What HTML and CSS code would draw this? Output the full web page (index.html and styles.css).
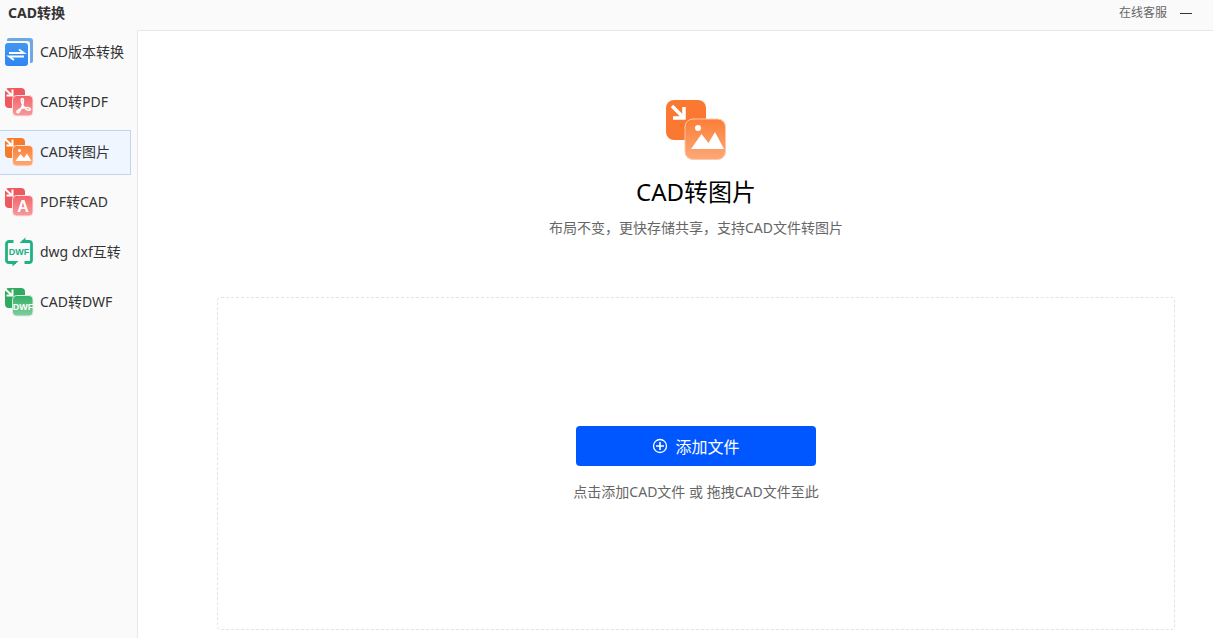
FILE: index.html
```html
<!DOCTYPE html>
<html lang="zh-CN">
<head>
    <meta charset="UTF-8">
    <meta name="viewport" content="width=device-width, initial-scale=1.0">
    <title>CAD转换</title>
    <link rel="stylesheet" href="styles.css">
</head>
<body>
    <header class="titlebar">
        <h1>CAD转换</h1>
        <div class="titlebar-actions">
            <a href="#">在线客服</a>
            <button type="button" class="minimize" aria-label="最小化">
                <svg width="12" height="12" viewBox="0 0 12 12"><path d="M0 6.5h12" stroke="#333"/></svg>
            </button>
        </div>
    </header>

    <div class="layout">
        <nav class="sidebar">
            <a href="#" class="nav-item">
                <svg class="nav-icon" viewBox="0 0 28 28">
                    <defs>
                        <linearGradient id="blue" x1="0" y1="0" x2="0" y2="1">
                            <stop offset="0" stop-color="#4297f2"/>
                            <stop offset="1" stop-color="#2f86f0"/>
                        </linearGradient>
                    </defs>
                    <path d="M4 0h21a3 3 0 0 1 3 3v20a2 2 0 0 1-2 2h-1V6a3 3 0 0 0-3-3H2V2a2 2 0 0 1 2-2z" fill="#6aa8e6"/>
                    <rect y="5" width="23" height="23" rx="3" fill="url(#blue)"/>
                    <path d="M4 15h15L14 11.500M19 18.500H4l5 3.500" fill="none" stroke="#fff" stroke-width="1.800"/>
                </svg>
                <span>CAD版本转换</span>
            </a>
            <a href="#" class="nav-item">
                <svg class="nav-icon" viewBox="0 0 28 28">
                    <defs>
                        <linearGradient id="red" x1="0" y1="0" x2="0" y2="1">
                            <stop offset="0" stop-color="#f2656a"/>
                            <stop offset="1" stop-color="#f79a9c"/>
                        </linearGradient>
                    </defs>
                    <rect width="20" height="20" rx="4" fill="#ed595f"/>
                    <path d="M0 1l6 5.500M7.500 1.500v6H1.500" fill="none" stroke="#fff" stroke-width="2"/>
                    <rect x="7.500" y="7.500" width="20.500" height="20.500" rx="4" fill="url(#red)" stroke="#fde3e3"/>
                    <path d="M17.500 10.500c-1.700 0-1.500 2.500 0 6 1.500 3.500 4.500 6 6.700 5.700s1-2.700-2-2.700c-4 0-8 1.500-9.700 3.300-1.500 1.700.500 2.700 1.800.900 1.800-2.700 3.700-6.400 4-9.700.2-2.200.1-3.500-.8-3.500z" fill="none" stroke="#fff" stroke-width="1.600"/>
                </svg>
                <span>CAD转PDF</span>
            </a>
            <a href="#" class="nav-item active">
                <svg class="nav-icon" viewBox="0 0 28 28">
                    <defs>
                        <linearGradient id="orange" x1="0" y1="0" x2="0" y2="1">
                            <stop offset="0" stop-color="#fb7f37"/>
                            <stop offset="1" stop-color="#fda878"/>
                        </linearGradient>
                    </defs>
                    <rect width="20" height="20" rx="4" fill="#f47a2c"/>
                    <path d="M0 1l6 5.500M7.500 1.500v6H1.500" fill="none" stroke="#fff" stroke-width="2"/>
                    <rect x="7.500" y="7.500" width="20.500" height="20.500" rx="4" fill="url(#orange)" stroke="#fde5d5"/>
                    <circle cx="14.500" cy="12.500" r="1.500" fill="#fff"/>
                    <path d="M10.500 23l5-7 3.500 4 3-4.500 4.500 7.500z" fill="#fff"/>
                </svg>
                <span>CAD转图片</span>
            </a>
            <a href="#" class="nav-item">
                <svg class="nav-icon" viewBox="0 0 28 28">
                    <rect width="20" height="20" rx="4" fill="#ed595f"/>
                    <path d="M0 1l6 5.500M7.500 1.500v6H1.500" fill="none" stroke="#fff" stroke-width="2"/>
                    <rect x="7.500" y="7.500" width="20.500" height="20.500" rx="4" fill="url(#red)" stroke="#fde3e3"/>
                    <text x="18" y="24" class="icon-letter">A</text>
                </svg>
                <span>PDF转CAD</span>
            </a>
            <a href="#" class="nav-item">
                <svg class="nav-icon" viewBox="0 0 28 28">
                    <path d="M8.500 3.500H4A2.500 2.500 0 0 0 1.500 6v16A2.500 2.500 0 0 0 4 24.500h7M19.500 24.500H24a2.500 2.500 0 0 0 2.500-2.500V6A2.500 2.500 0 0 0 24 3.500h-7" fill="none" stroke="#22b183" stroke-width="2.800"/>
                    <path d="M14.500 5L20.500-.5V5zM13.500 23L7.500 28.500V23z" fill="#22b183"/>
                    <text x="14" y="17" class="icon-label green">DWF</text>
                </svg>
                <span>dwg dxf互转</span>
            </a>
            <a href="#" class="nav-item">
                <svg class="nav-icon" viewBox="0 0 28 28">
                    <defs>
                        <linearGradient id="green" x1="0" y1="0" x2="0" y2="1">
                            <stop offset="0" stop-color="#34b066"/>
                            <stop offset="1" stop-color="#80cd9d"/>
                        </linearGradient>
                    </defs>
                    <rect width="20" height="20" rx="4" fill="#2faa5e"/>
                    <path d="M0 1l6 5.500M7.500 1.500v6H1.500" fill="none" stroke="#fff" stroke-width="2"/>
                    <rect x="7.500" y="7.500" width="20.500" height="20.500" rx="4" fill="url(#green)" stroke="#d5efdf"/>
                    <text x="18" y="22" class="icon-label">DWF</text>
                </svg>
                <span>CAD转DWF</span>
            </a>
        </nav>

        <main class="content">
            <section class="intro">
                <svg class="intro-icon" viewBox="0 0 60 60">
                    <rect width="40" height="40" rx="8" fill="#fa7832"/>
                    <path d="M6 6l11 11M18 7v11H7" fill="none" stroke="#fff" stroke-width="3.500"/>
                    <rect x="19" y="19" width="40.500" height="40.500" rx="8" fill="url(#orange)" stroke="#fdc9a8"/>
                    <circle cx="32" cy="28" r="3" fill="#fff"/>
                    <path d="M25 49l10.500-15 7 9L49 32l9 17z" fill="#fff"/>
                </svg>
                <h2>CAD转图片</h2>
                <p>布局不变，更快存储共享，支持CAD文件转图片</p>
            </section>

            <section class="dropzone">
                <button type="button" class="add-btn">
                    <svg width="16" height="16" viewBox="0 0 16 16" fill="none" stroke="#fff">
                        <circle cx="8" cy="8" r="6.500" stroke-width="1.300"/>
                        <path d="M8 4v8M4 8h8" stroke-width="1.600"/>
                    </svg>
                    <span>添加文件</span>
                </button>
                <p>点击添加CAD文件 或 拖拽CAD文件至此</p>
            </section>
        </main>
    </div>
</body>
</html>
```
FILE: styles.css
```css
* {
    margin: 0;
    padding: 0;
    box-sizing: border-box;
}

body {
    display: flex;
    flex-direction: column;
    height: 100vh;
    background: #fafafa;
    color: #333;
    font-family: "Noto Sans", "Noto Sans CJK SC", sans-serif;
    font-size: 14px;
    line-height: 20px;
}

a {
    color: inherit;
    text-decoration: none;
}

button {
    border: none;
    font-family: inherit;
    cursor: pointer;
}

svg {
    display: block;
    flex-shrink: 0;
}

/* Title bar */
.titlebar {
    display: flex;
    justify-content: space-between;
    height: 30px;
    padding: 3px 21px 7px 8px;
}

.titlebar h1 {
    font-size: 14px;
    font-weight: bold;
}

.titlebar-actions {
    display: flex;
    align-items: center;
    gap: 13px;
    font-size: 12px;
    color: #666;
}

.minimize {
    background: none;
}

.layout {
    display: flex;
    flex: 1;
    min-height: 0;
}

/* Sidebar */
.sidebar {
    display: flex;
    flex-direction: column;
    gap: 5px;
    width: 137px;
    flex-shrink: 0;
    padding-right: 6px;
}

.nav-item {
    display: flex;
    align-items: center;
    gap: 7px;
    height: 45px;
    padding: 0 0 1px 5px;
    border: 1px solid transparent;
    border-left: none;
    white-space: nowrap;
}

.nav-item.active {
    background: #f0f6ff;
    border-color: #bfd6ea;
}

.nav-icon {
    width: 28px;
    height: 28px;
    overflow: visible;
}

.icon-letter,
.icon-label {
    fill: #fff;
    font-family: "Liberation Sans", sans-serif;
    font-weight: bold;
    text-anchor: middle;
}

.icon-letter {
    font-size: 16px;
}

.icon-label {
    font-size: 9px;
}

.icon-label.green {
    fill: #22b183;
}

/* Main area */
.content {
    display: flex;
    flex-direction: column;
    flex: 1;
    padding: 69px 38px 8px 79px;
    background: #fff;
    border-top: 1px solid #e8e8e8;
    border-left: 1px solid #e8e8e8;
}

.intro {
    display: flex;
    flex-direction: column;
    align-items: center;
    text-align: center;
    color: #666;
}

.intro-icon {
    width: 60px;
    height: 60px;
}

.intro h2 {
    margin: 16px 0 10px;
    font-size: 24px;
    font-weight: normal;
    line-height: 32px;
    color: #000;
}

.dropzone {
    display: flex;
    flex: 1;
    flex-direction: column;
    align-items: center;
    justify-content: center;
    gap: 16px;
    margin-top: 59px;
    border: 1px dashed #e4e4e4;
    border-radius: 4px;
    color: #666;
}

.add-btn {
    display: flex;
    align-items: center;
    justify-content: center;
    gap: 7px;
    width: 240px;
    height: 40px;
    border-radius: 4px;
    background: #0057ff;
    color: #fff;
    font-size: 16px;
}
```
